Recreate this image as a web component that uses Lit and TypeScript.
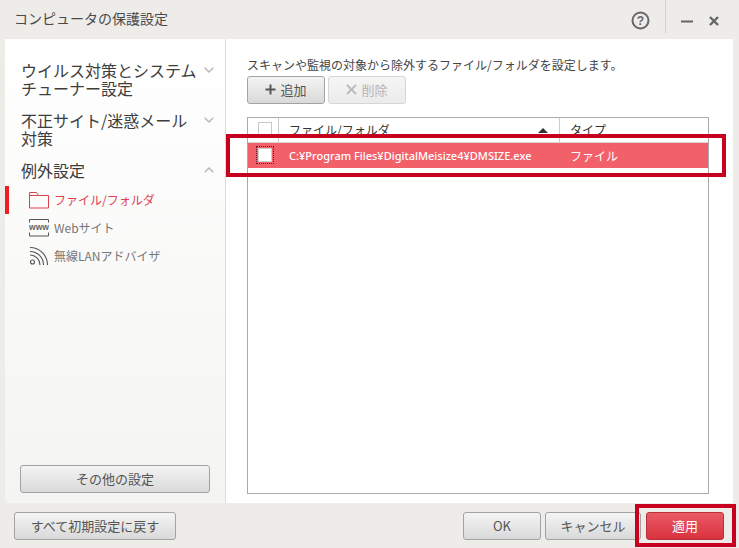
import { LitElement, html, css } from "lit";
import { customElement } from "lit/decorators.js";

const chevDown = html`<svg class="chev" width="10" height="6" viewBox="0 0 10 6"><path d="M.7.7 5 5 9.3.7" fill="none" stroke="#b9b9b9" stroke-width="1.5"/></svg>`;
const chevUp = html`<svg class="chev" width="10" height="6" viewBox="0 0 10 6"><path d="M.7 5.3 5 1 9.3 5.3" fill="none" stroke="#b9b9b9" stroke-width="1.5"/></svg>`;

@customElement("app-root")
export class AppRoot extends LitElement {
  static styles = css`
    :host {
      display: block;
      position: relative;
      width: 739px;
      height: 548px;
      overflow: hidden;
      background: #edece9;
      font-family: "Noto Sans CJK JP", "Noto Sans", sans-serif;
      color: #333;
    }
    .titlebar { height: 39px; display: flex; align-items: flex-start; padding-left: 14px; box-sizing: border-box; }
    .title { font-size: 14px; line-height: 39px; color: #4a4a4a; flex: 1; margin-top: -1px; }
    .help { width: 19px; height: 19px; margin: 11px 15px 0 0; }
    .vsep { width: 1px; height: 33px; background: #d3d2cf; }
    .win-btn { display: block; }
    .min { margin: 20px 0 0 15px; }
    .close { margin: 16px 20px 0 16px; }
    .main { height: 464px; display: flex; margin: 0 6px 0 5px; }
    .sidebar {
      width: 220px;
      box-sizing: border-box;
      display: flex;
      flex-direction: column;
      padding-top: 22px;
      background: linear-gradient(#ffffff, #f4f4f2);
    }
    .vline { width: 1px; background: #dcdcdc; }
    .group { display: flex; justify-content: space-between; align-items: flex-start; padding: 0 11px 0 16px; margin-bottom: 14px; }
    .group:nth-child(3) { margin-bottom: 7px; }
    .gtitle { font-size: 16px; line-height: 18px; color: #3d3d3d; width: 178px; }
    .chev { margin-top: 6px; flex: none; }
    .sub { height: 28px; display: flex; align-items: center; gap: 5px; padding-left: 24px; font-size: 12px; color: #777; box-sizing: border-box; }
    .sub span { margin-top: -2px; }
    .sub svg { flex: none; width: 20px; height: 20px; }
    .sub.active { color: #e0404e; box-shadow: inset 4px 0 0 #ee1c25; }
    .divider { height: 1px; margin: 0 9px 0 5px; background: #fafafa; }
    .spacer { flex: 1; }
    .more { margin: 0 15px 10px; height: 28px; }
    .btn {
      box-sizing: border-box;
      height: 28px;
      display: flex;
      align-items: center;
      justify-content: center;
      padding-bottom: 2px;
      border: 1px solid #a3a3a3;
      border-radius: 3px;
      background: linear-gradient(#f4f4f4, #d9d9d9);
      font-size: 13px;
      color: #555;
    }
    .btn.disabled { border-color: #d6d6d6; background: linear-gradient(#f5f5f5, #ebebeb); color: #b5b5b5; }
    .content { flex: 1; background: #fff; padding: 16px 24px 9px 21px; box-sizing: border-box; display: flex; flex-direction: column; }
    .desc { font-size: 12px; line-height: 20px; color: #444; margin-bottom: 1px; }
    .tools { display: flex; gap: 3px; margin-bottom: 13px; }
    .tools .btn { width: 78px; gap: 4px; }
    .table { flex: 1; border: 1px solid #aaa; display: flex; flex-direction: column; }
    .row { display: grid; grid-template-columns: 31px 281px 1fr; }
    .thead { height: 25px; border-bottom: 1px solid #d6d6d6; box-sizing: border-box; font-size: 12px; color: #333; }
    .thead > div { border-right: 1px solid #ccc; display: flex; align-items: center; padding: 0 0 2px 10px; }
    .thead > div:last-child { border-right: 0; }
    .check { width: 14px; height: 14px; box-sizing: border-box; border: 1px solid #c8c8c8; background: #fff; }
    .sort { margin-left: auto; margin-right: 11px; margin-top: 3px; width: 0; height: 0; border: 5px solid transparent; border-top: 0; border-bottom: 5px solid #333; }
    .trow { height: 25px; background: #f2606a; color: #fff; font-size: 12px; }
    .trow > div { display: flex; align-items: center; padding-left: 10px; white-space: nowrap; }
    .trow .path { font-weight: 500; font-family: "Noto Sans", "Noto Sans CJK JP", sans-serif; font-size: 11px; }
    .focus { padding: 1px; border: 1px dotted #5a2026; margin-left: -2px; margin-top: -1px; }
    .focus .check { border-color: #ccc; }
    .footer { height: 45px; display: flex; align-items: center; padding: 1px 15px 0 14px; box-sizing: border-box; }
    .footer .reset { width: 162px; }
    .footer .ok { width: 78px; margin-left: auto; }
    .footer .cancel { width: 96px; margin-left: 4px; }
    .footer .apply { width: 78px; margin-left: 5px; background: linear-gradient(#e95a65, #d9323f); border-color: #b8303a; color: #fff; }
    .mark { position: absolute; border: 4px solid #c6001e; box-sizing: border-box; pointer-events: none; }
    .mark.row-mark { left: 226px; top: 134px; width: 500px; height: 43px; }
    .mark.apply-mark { left: 635px; top: 504px; width: 101px; height: 43px; }
  `;

  render() {
    return html`
      <div class="titlebar">
        <div class="title">コンピュータの保護設定</div>
        <svg class="help" viewBox="0 0 19 19">
          <circle cx="9.5" cy="9.5" r="8" fill="none" stroke="#666" stroke-width="2"/>
          <text x="9.5" y="14" text-anchor="middle" font-family="Liberation Sans" font-weight="700" font-size="12" fill="#666">?</text>
        </svg>
        <div class="vsep"></div>
        <svg class="win-btn min" width="12" height="3" viewBox="0 0 12 3"><rect y=".5" width="12" height="2" fill="#666"/></svg>
        <svg class="win-btn close" width="10" height="10" viewBox="0 0 10 10"><path d="M1 1l8 8M9 1l-8 8" stroke="#666" stroke-width="2.4" fill="none"/></svg>
      </div>
      <div class="main">
        <div class="sidebar">
          <div class="group"><div class="gtitle">ウイルス対策とシステムチューナー設定</div>${chevDown}</div>
          <div class="group"><div class="gtitle">不正サイト/迷惑メール対策</div>${chevDown}</div>
          <div class="group"><div class="gtitle">例外設定</div>${chevUp}</div>
          <div class="sub active">
            <svg viewBox="0 0 20 20"><path d="M.5 18V2.5h7l2 3h10V18z M.5 5.5h9" fill="none" stroke="#e0404e"/></svg>
            <span>ファイル/フォルダ</span>
          </div>
          <div class="sub">
            <svg viewBox="0 0 20 20">
              <path d="M.5 4.5v-3h19v3M.5 14.5v3.5h19v-3.5" fill="none" stroke="#555"/>
              <text x="10" y="11.5" text-anchor="middle" font-family="Liberation Sans" font-weight="700" font-size="8.5" fill="#666">www</text>
            </svg>
            <span>Webサイト</span>
          </div>
          <div class="sub">
            <svg viewBox="0 0 20 20" fill="none" stroke="#555" stroke-width="1.1">
              <circle cx="3.5" cy="16" r="2"/>
              <path d="M1 9a10 10 0 0 1 10 10M1 5.5a13.5 13.5 0 0 1 13.5 13.5M1 1.5a17.5 17.5 0 0 1 17.5 17.5"/>
            </svg>
            <span>無線LANアドバイザ</span>
          </div>
          <div class="divider"></div>
          <div class="spacer"></div>
          <div class="btn more">その他の設定</div>
        </div>
        <div class="vline"></div>
        <div class="content">
          <div class="desc">スキャンや監視の対象から除外するファイル/フォルダを設定します。</div>
          <div class="tools">
            <div class="btn">
              <svg width="11" height="11" viewBox="0 0 11 11"><path d="M5.5.5v10M.5 5.5h10" stroke="#555" stroke-width="2"/></svg>追加
            </div>
            <div class="btn disabled">
              <svg width="11" height="11" viewBox="0 0 11 11"><path d="M1 1l9 9M10 1l-9 9" stroke="#bbb" stroke-width="2"/></svg>削除
            </div>
          </div>
          <div class="table">
            <div class="row thead">
              <div><span class="check"></span></div>
              <div>ファイル/フォルダ<span class="sort"></span></div>
              <div>タイプ</div>
            </div>
            <div class="row trow">
              <div><span class="focus"><div class="check"></div></span></div>
              <div class="path">C:¥Program Files¥DigitalMeisize4¥DMSIZE.exe</div>
              <div>ファイル</div>
            </div>
          </div>
        </div>
      </div>
      <div class="footer">
        <div class="btn reset">すべて初期設定に戻す</div>
        <div class="btn ok">OK</div>
        <div class="btn cancel">キャンセル</div>
        <div class="btn apply">適用</div>
      </div>
      <div class="mark row-mark"></div>
      <div class="mark apply-mark"></div>
    `;
  }
}
